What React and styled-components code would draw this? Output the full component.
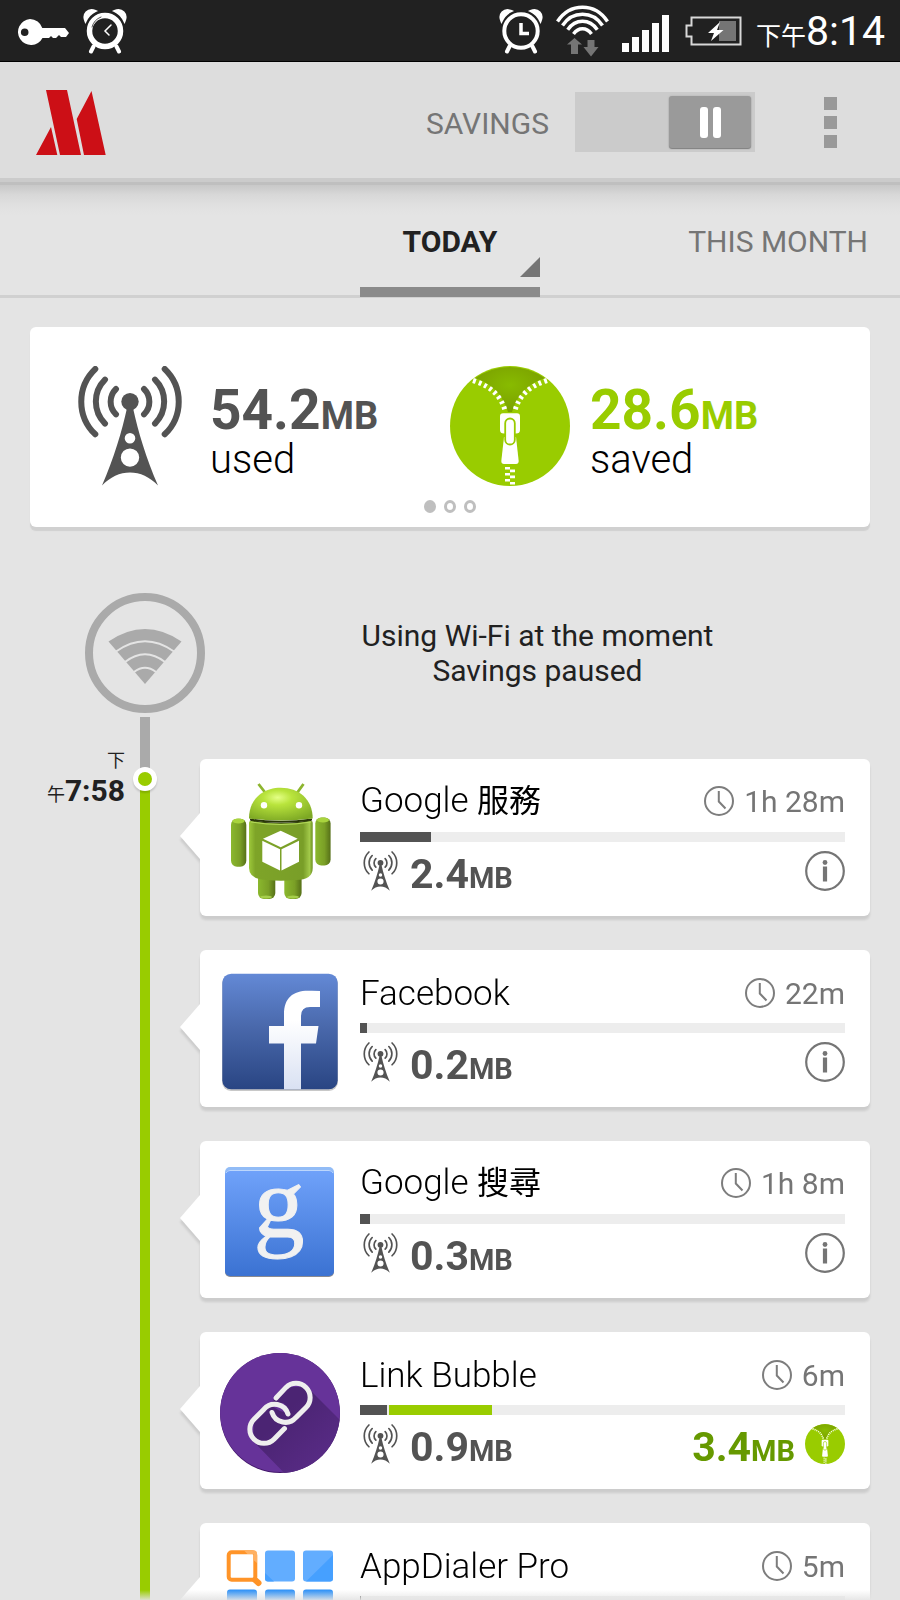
import React, { useState } from 'react';
import styled, { createGlobalStyle } from 'styled-components';

const GlobalStyle = createGlobalStyle`
  *, *::before, *::after { box-sizing: border-box; }
  body {
    margin: 0;
    background: #e4e4e4;
    color: #212121;
    font-family: Roboto, "Noto Sans CJK TC", sans-serif;
  }
  button { font: inherit; color: inherit; background: none; border: 0; padding: 0; cursor: pointer; }
`;

const Screen = styled.div`
  position: relative;
  display: flex;
  flex-direction: column;
  height: 100vh;
  overflow: hidden;
`;

const StatusBar = styled.div`
  display: flex;
  align-items: center;
  justify-content: space-between;
  flex: none;
  height: 62px;
  padding: 0 15px 0 16px;
  background: #212121;
  border-bottom: 1px solid #000;
`;

const StatusGroup = styled.div`
  display: flex;
  align-items: center;
  gap: 13px;
`;

const StatusClock = styled.time`
  padding-top: 6px;
  color: #fff;
  font-size: 41px;
  line-height: 54px;
  white-space: nowrap;
`;

const Meridiem = styled.span`
  font-size: ${(p) => p.$size}px;
  font-weight: 400;
`;

const Header = styled.header`
  display: flex;
  align-items: center;
  flex: none;
  height: 123px;
  padding: 0 54px 0 36px;
  background: #ddd;
  border-bottom: 3px solid #bfbfbf;
  box-shadow: inset 0 -4px #cbcbcb;
`;

const SavingsLabel = styled.label`
  margin-left: auto;
  padding-top: 4px;
  color: #757575;
  font-size: 30px;
  line-height: 36px;
`;

const Switch = styled.span`
  display: grid;
  align-items: center;
  margin-left: 26px;
  background: #cbcbcb;

  > * { grid-area: 1 / 1; }
`;

const SwitchInput = styled.input`
  appearance: none;
  width: 180px;
  height: 60px;
  margin: 0;
  cursor: pointer;
`;

const SwitchThumb = styled.span`
  display: flex;
  align-items: center;
  justify-content: center;
  gap: 5px;
  justify-self: ${(p) => (p.$on ? 'start' : 'end')};
  width: 82px;
  height: 52px;
  margin: 0 4px;
  border-radius: 3px;
  background: #9a9a9a;
  box-shadow: 0 1px 1px #7f7f7f, 0 0 2px #aaa;
  pointer-events: none;
`;

const PauseBar = styled.span`
  width: 8px;
  height: 31px;
  border-radius: 3px;
  background: #fff;
`;

const MenuButton = styled.button`
  display: flex;
  flex-direction: column;
  align-items: center;
  gap: 6px;
  width: 31px;
  margin-left: 60px;
`;

const MenuSquare = styled.span`
  width: 13px;
  height: 13px;
  background: #999;
`;

const Tabs = styled.nav`
  display: grid;
  grid-template-columns: 1fr 180px 1fr;
  flex: none;
  height: 113px;
  background: linear-gradient(#c8c8c8, #d8d8d8 10px, #e0e0e0 20px, #e4e4e4 30px);
  border-bottom: 3px solid #d0d0d0;
`;

const Tab = styled.button`
  position: relative;
  grid-column: ${(p) => p.$column};
  justify-self: ${(p) => (p.$column === 3 ? 'end' : 'stretch')};
  padding: 3px ${(p) => (p.$column === 3 ? 32 : 0)}px 0;
  color: ${(p) => (p.$active ? '#212121' : '#757575')};
  font-size: 30px;
  font-weight: ${(p) => (p.$active ? 700 : 400)};
  line-height: 36px;
`;

const TabUnderline = styled.span`
  position: absolute;
  left: 0;
  right: 0;
  bottom: -2px;
  height: 10px;
  background: #8a8a8a;
`;

const TabCorner = styled.span`
  position: absolute;
  right: 0;
  bottom: 18px;
  width: 20px;
  height: 20px;
  background: #757575;
  clip-path: polygon(100% 0, 100% 100%, 0 100%);
`;

const Content = styled.main`
  flex: 1;
  min-height: 0;
  overflow-y: auto;
  scrollbar-width: none;
`;

const Summary = styled.section`
  display: grid;
  grid-template-columns: 1fr 1fr;
  margin: 29px 30px 0;
  padding: 39px 0 14px;
  border-radius: 6px;
  background: #fff;
  box-shadow: 0 4px 1px #d0d0d0;
`;

const Total = styled.div`
  display: flex;
  gap: 20px;
  padding-left: ${(p) => p.$inset || 0}px;
`;

const TotalText = styled.div`
  padding-top: 19px;
`;

const TotalValue = styled.div`
  color: ${(p) => p.$color};
  font-size: 55px;
  font-weight: 700;
  line-height: 50px;
  white-space: nowrap;
`;

const TotalUnit = styled.span`
  font-size: 38px;
`;

const TotalCaption = styled.div`
  color: #000;
  font-size: 40px;
  font-weight: 300;
  line-height: 38px;
`;

const Dots = styled.div`
  grid-column: 1 / -1;
  display: flex;
  justify-content: center;
  gap: 8px;
  margin-top: 14px;
`;

const Dot = styled.button`
  width: 12px;
  height: 13px;
  border: 3px solid #bfbfbf;
  border-radius: 50%;
  background: ${(p) => (p.$active ? '#bfbfbf' : '#fff')};
`;

const Connection = styled.section`
  display: flex;
  align-items: flex-start;
  padding: 66px 30px 4px 85px;
`;

const ConnectionText = styled.p`
  flex: 1;
  margin: 0;
  padding-top: 25px;
  color: #212121;
  font-size: 30px;
  line-height: 35px;
  text-align: center;
`;

const Timeline = styled.section`
  display: flex;
  align-items: stretch;
`;

const TimeLabel = styled.time`
  flex: none;
  width: 80px;
  margin: 25px 15px 0 45px;
  font-size: 30px;
  font-weight: 700;
  line-height: 30px;
  text-align: right;
  white-space: nowrap;
`;

const Rail = styled.div`
  display: flex;
  flex-direction: column;
  align-items: center;
  flex: none;
  width: 10px;
  margin-right: 50px;
`;

const RailPart = styled.span`
  flex: ${(p) => (p.$length ? 'none' : 1)};
  width: 10px;
  height: ${(p) => (p.$length ? `${p.$length}px` : 'auto')};
  background: ${(p) => p.$color};
`;

const RailDot = styled.span`
  position: relative;
  flex: none;
  width: 24px;
  height: 24px;
  margin: -12px 0;
  border: 5px solid #fff;
  border-radius: 50%;
  background: #9c0;
  box-shadow: 0 2px 2px rgba(0, 0, 0, 0.15);
`;

const AppList = styled.ul`
  display: flex;
  flex: 1;
  flex-direction: column;
  gap: 34px;
  min-width: 0;
  margin: 0;
  padding: 42px 30px 34px 0;
  list-style: none;
`;

const AppCard = styled.li`
  position: relative;
  display: flex;
  gap: 20px;
  min-height: 157px;
  padding: 21px 25px 16px 20px;
  border-radius: 6px;
  background: #fff;
  filter: drop-shadow(0 4px 1px rgba(0, 0, 0, 0.1));

  &::before {
    content: '';
    position: absolute;
    top: 54px;
    left: -20px;
    border: solid transparent;
    border-width: 23px 20px 23px 0;
    border-right-color: #fff;
  }
`;

const AppBody = styled.div`
  flex: 1;
  min-width: 0;
`;

const AppHead = styled.div`
  display: flex;
  align-items: center;
  justify-content: space-between;
  height: 42px;
  padding-top: ${(p) => (p.$mixed ? 0 : 2)}px;
`;

const AppName = styled.h2`
  margin: 0;
  padding-top: ${(p) => (p.$mixed ? 0 : 2)}px;
  color: #000;
  font-size: 35px;
  font-weight: 300;
  line-height: 42px;
  white-space: nowrap;
`;

const HanText = styled.span`
  font-size: 32px;
  font-weight: 400;
`;

const Duration = styled.span`
  display: flex;
  align-items: center;
  gap: 10px;
  color: #757575;
  font-size: 30px;
  line-height: 40px;
  white-space: nowrap;
`;

const DurationText = styled.span`
  padding-top: 2px;
`;

const UsageBar = styled.div`
  display: flex;
  gap: 2px;
  height: 10px;
  margin-top: 10px;
  background: #ededed;
`;

const UsagePart = styled.span`
  background: ${(p) => p.$color};
`;

const AppFoot = styled.div`
  display: flex;
  align-items: flex-start;
  margin-top: 9px;
`;

const FootIcon = styled.span`
  display: flex;
  width: 40px;
  height: 40px;
  justify-content: center;
`;

const Amount = styled.span`
  margin: 0 10px;
  padding-top: 3px;
  color: ${(p) => p.$color};
  font-size: 41px;
  font-weight: 700;
  line-height: 40px;
  white-space: nowrap;
`;

const AmountUnit = styled.span`
  font-size: 29px;
`;

const Push = styled.span`
  flex: 1;
`;

const IconButton = styled.button`
  display: flex;
`;

const BottomFade = styled.div`
  position: absolute;
  left: 0;
  right: 0;
  bottom: 0;
  height: 10px;
  background: linear-gradient(rgba(228, 228, 228, 0), rgba(228, 228, 228, 0.9));
  pointer-events: none;
`;

function KeyIcon() {
  return (
    <svg width="54" height="46" viewBox="0 0 54 46" fill="#fff" aria-hidden="true">
      <path fillRule="evenodd" d="M14 11a13 13 0 0 1 12.3 9H49l4 5-3 4h-5l-2-2-3 3h-3l-2-2-2 2h-6.500A13 13 0 1 1 14 11zM8.700 20.500a3.800 3.800 0 1 0 0 7.600 3.800 3.800 0 0 0 0-7.600z" />
    </svg>
  );
}

function AlarmIcon({ bold }) {
  return (
    <svg width="44" height="46" viewBox="0 0 44 46" fill="none" stroke="#fff" strokeLinecap="round" aria-hidden="true">
      <path d="M2.500 13.500C-1 6 5 0 12.500 3C8 5 5 8 2.500 13.500zM41.500 13.500C45 6 39 0 31.500 3C36 5 39 8 41.500 13.500z" fill="#fff" strokeWidth="2" />
      <circle cx="22" cy="23" r={bold ? 15.500 : 16.700} strokeWidth={bold ? 5.500 : 4} />
      <path d="M10.500 38.500L8 43.500M33.500 38.500L36 43.500" strokeWidth="4" />
      {bold ? (
        <g>
          <path d="M28 17L22 23L26 27" strokeWidth="1.500" />
          <path d="M9 19a14.500 14.500 0 0 1 9-10" stroke="#555" strokeWidth="1" />
        </g>
      ) : (
        <path d="M22 15V25.500H30" strokeWidth="3.500" strokeLinecap="butt" />
      )}
    </svg>
  );
}

function WifiStatusIcon() {
  return (
    <svg width="53" height="52" viewBox="0 0 53 52" fill="none" stroke="#fff" strokeWidth="3.500" aria-hidden="true">
      <path d="M1.500 16.500C14 -2.500 39 -2.500 51.500 16.500M6.500 20.500C16.500 5.500 36.500 5.500 46.500 20.500M11.700 24.700C19.500 13.500 33.500 13.500 41.300 24.700M17.500 29C22.500 22 30.500 22 35.500 29" />
      <path d="M18.500 33L26 39.500H22V49H15V39.500H11zM31.500 35H38.500V42H42.500L35 51.500L27.500 42H31.500z" fill="#757575" stroke="none" />
    </svg>
  );
}

function SignalIcon() {
  return (
    <svg width="47" height="42" viewBox="0 0 47 42" fill="#fff" aria-hidden="true">
      <path d="M0 33h7v9H0zM10 27h7v15h-7zM20 20h7v22h-7zM30 13h7v29h-7zM40 5h7v37h-7z" />
    </svg>
  );
}

function BatteryIcon() {
  return (
    <svg width="61" height="30" viewBox="-3 0 61 30" aria-hidden="true">
      <path d="M6.500 1.500H55.500V28.500H6.500V20.500H1.500V9.500H6.500z" fill="none" stroke="#d8d8d8" strokeWidth="2" />
      <path d="M34 5H51V25H34z" fill="#757575" />
      <path d="M35 6L23 17H29L26 25L38.500 14H32z" fill="#fff" />
    </svg>
  );
}

function OperaMaxLogo() {
  return (
    <svg width="70" height="65" viewBox="0 0 70 65" fill="#cc0f16" role="img" aria-label="Opera Max">
      <path d="M10 0H31L45 65H24zM15 37L21.300 65H0zM55.500 1L69.700 65H48L40.700 29z" />
    </svg>
  );
}

function TowerIcon({ width = 104, height = 120, stroke = 6 }) {
  return (
    <svg width={width} height={height} viewBox="0 0 104 120" aria-hidden="true">
      <g fill="none" stroke="#535353" strokeWidth={stroke} strokeLinecap="round">
        <path d="M17.300 3A45 45 0 0 0 17.300 68.300M27 13.600A31 31 0 0 0 27 57.600M38 23A17.600 17.600 0 0 0 38 48.300" />
        <path d="M86.700 3A45 45 0 0 1 86.700 68.300M77 13.600A31 31 0 0 1 77 57.600M66 23A17.600 17.600 0 0 1 66 48.300" />
      </g>
      <circle cx="52" cy="35.600" r="8.700" fill="#535353" />
      <path
        fillRule="evenodd"
        fill="#535353"
        d="M49 42H55C60 65 68 92 80 119.500C64 102 40 102 24 119.500C36 92 44 65 49 42zM52 67a5.300 5.300 0 1 0 0 10.600a5.300 5.300 0 0 0 0-10.600zM52 82.400a9.200 9.200 0 1 0 0 18.400a9.200 9.200 0 0 0 0-18.400z"
      />
    </svg>
  );
}

function ZipperIcon({ size = 120 }) {
  return (
    <svg width={size} height={size} viewBox="0 0 120 120" aria-hidden="true">
      <defs>
        <radialGradient id="zipShade" cx="0.5" cy="0.4" r="0.6">
          <stop offset="0" stopColor="#8b0" />
          <stop offset="1" stopColor="#7a9f00" />
        </radialGradient>
      </defs>
      <circle cx="60" cy="60" r="60" fill="#9c0" />
      <path d="M25 12.300A60 60 0 0 1 95 12.300C79 17 67 29 62 46H58C53 29 41 17 25 12.300z" fill="url(#zipShade)" />
      <path d="M23 14.500C40 20 51 29 55.500 46M97 14.500C80 20 69 29 64.500 46" fill="none" stroke="#fff" strokeWidth="5" strokeDasharray="2.800 3.200" />
      <path d="M53 47.300H67Q70 47.300 70 50.300V64Q70 67.500 66 67.500H54Q50 67.500 50 64V50.300Q50 47.300 53 47.300z" fill="#fff" />
      <path d="M54 71H66L68.700 95Q68.700 98 66 98H54Q51.300 98 51.300 95z" fill="#fff" />
      <rect x="55.200" y="52.500" width="9.600" height="26" rx="4.800" fill="#fff" stroke="#9c0" strokeWidth="1.800" />
      <path d="M55 101h5v2.600h-5zM60 103.600h5v2.600h-5zM55 107h5v2.600h-5zM60 109.600h5v2.600h-5zM55 113h5v2.600h-5zM60 116h5v2.600h-5z" fill="#fff" />
    </svg>
  );
}

function WifiRoundIcon() {
  return (
    <svg width="120" height="120" viewBox="0 0 120 120" role="img" aria-label="Wi-Fi">
      <circle cx="60" cy="60" r="56" fill="none" stroke="#aaa" strokeWidth="8" />
      <path d="M23.500 48.500Q60 23.500 96.500 48.500L60 91z" fill="#aaa" />
      <path d="M31 58.500Q60 38 89 58.500M40 69Q60 53.500 80 69M49 79Q60 70.500 71 79" fill="none" stroke="#e4e4e4" strokeWidth="2" />
    </svg>
  );
}

function ClockIcon() {
  return (
    <svg width="30" height="30" viewBox="0 0 30 30" fill="none" stroke="#7d7d7d" strokeWidth="2" aria-hidden="true">
      <circle cx="15" cy="15" r="14" />
      <path d="M14.800 5V15.500L21.500 22.500" />
    </svg>
  );
}

function InfoIcon() {
  return (
    <svg width="40" height="40" viewBox="0 0 40 40" aria-hidden="true">
      <circle cx="20" cy="20" r="18.800" fill="none" stroke="#757575" strokeWidth="2.200" />
      <circle cx="20" cy="11.500" r="2.400" fill="#757575" />
      <path d="M17.900 15.500H22.100V30.500H17.900z" fill="#757575" />
    </svg>
  );
}

function AndroidArt() {
  return (
    <svg width="120" height="120" viewBox="0 0 120 120" aria-hidden="true">
      <defs>
        <radialGradient id="droidHead" cx="0.45" cy="0.3" r="0.75">
          <stop offset="0" stopColor="#e4ff86" />
          <stop offset="0.3" stopColor="#b9e43c" />
          <stop offset="1" stopColor="#7da824" />
        </radialGradient>
        <linearGradient id="droidBody" x1="0" y1="0" x2="1" y2="0">
          <stop offset="0" stopColor="#9dc83a" />
          <stop offset="0.1" stopColor="#7ea428" />
          <stop offset="0.85" stopColor="#799e28" />
          <stop offset="0.95" stopColor="#a2c94a" />
          <stop offset="1" stopColor="#6b8f20" />
        </linearGradient>
        <linearGradient id="droidLimb" x1="0" y1="0" x2="1" y2="0">
          <stop offset="0" stopColor="#8bb82e" />
          <stop offset="0.6" stopColor="#7a9f26" />
          <stop offset="1" stopColor="#567018" />
        </linearGradient>
      </defs>
      <path d="M38.500 4L45.500 13M83.500 4L77 13" stroke="#8db52e" strokeWidth="2.800" />
      <rect x="38" y="88" width="17.300" height="31" rx="6" fill="url(#droidLimb)" />
      <rect x="64.300" y="88" width="17.300" height="31" rx="6" fill="url(#droidLimb)" />
      <ellipse cx="46" cy="117" rx="6" ry="1.500" fill="#a6cf4b" />
      <ellipse cx="73" cy="117" rx="6" ry="1.500" fill="#a6cf4b" />
      <rect x="11" y="38.700" width="15.300" height="48" rx="6" fill="url(#droidLimb)" />
      <rect x="95.300" y="37.500" width="15.300" height="48" rx="6" fill="url(#droidLimb)" />
      <ellipse cx="18.500" cy="41" rx="6" ry="2.500" fill="#a9d43e" />
      <ellipse cx="103" cy="40" rx="6" ry="2.500" fill="#a9d43e" />
      <path d="M31 40Q61 46 91 40V44H31z" fill="#2a3808" />
      <path d="M29 43Q29 40.500 31 41Q61 46 91 41Q92.700 40.500 92.700 43V88Q92.700 100 76 100Q61 101.500 46 100Q29 99 29 88z" fill="url(#droidBody)" />
      <path d="M31 42Q61 47 91 42" fill="none" stroke="#b4da5b" strokeWidth="1" />
      <path d="M30 39.500Q61 44 92 39.500" fill="none" stroke="#2a3808" strokeWidth="2" />
      <path d="M29 38.500C29 19 43 7.700 60.800 7.700S92.700 19 92.700 38.500Q61 42.500 29 38.500z" fill="url(#droidHead)" />
      <circle cx="44" cy="25.300" r="3.200" fill="#fff" />
      <circle cx="79" cy="25.300" r="3.200" fill="#fff" />
      <path d="M60.700 50.700L77.700 58.700L60.700 67.300L43 58.700zM42.300 60.800L60 69.300V90.500L42.300 81.700zM79 60.800L61.500 69.300V90.500L79 81.700z" fill="#fff" />
    </svg>
  );
}

function FacebookArt() {
  return (
    <svg width="120" height="120" viewBox="0 0 120 120" aria-hidden="true">
      <defs>
        <linearGradient id="fbBlue" x1="0" y1="0" x2="0" y2="1">
          <stop offset="0" stopColor="#6389d6" />
          <stop offset="0.45" stopColor="#4a69ac" />
          <stop offset="1" stopColor="#294583" />
        </linearGradient>
        <linearGradient id="fbWhite" x1="0" y1="0" x2="0" y2="1">
          <stop offset="0.3" stopColor="#fff" />
          <stop offset="1" stopColor="#d9e1f3" />
        </linearGradient>
      </defs>
      <rect x="2" y="4" width="116" height="116" rx="9" fill="#c8c8c8" />
      <rect x="2.300" y="2.700" width="115.400" height="115.600" rx="9" fill="url(#fbBlue)" />
      <path d="M64 118.300V72.500H49V55H64V43C64 27 73 19.700 88 19.700Q95 19.500 100 20V36H90Q81 36 81 45V55H98.500L96 72.500H81V118.300z" fill="url(#fbWhite)" />
    </svg>
  );
}

const GoogleSvg = styled.svg`
  overflow: visible;
`;

function GoogleArt() {
  return (
    <GoogleSvg width="120" height="120" viewBox="0 0 120 120" aria-hidden="true">
      <defs>
        <linearGradient id="gBlue" x1="0" y1="0" x2="0" y2="1">
          <stop offset="0" stopColor="#70a2fa" />
          <stop offset="1" stopColor="#3b72d2" />
        </linearGradient>
      </defs>
      <rect x="5" y="7" width="109" height="108" rx="5" fill="#8a8a90" />
      <rect x="5" y="5" width="109" height="20" rx="5" fill="#92bcf6" />
      <rect x="5" y="8" width="109" height="106" rx="5" fill="url(#gBlue)" />
      <path d="M6 11Q7 8.500 10 8.500H109Q112 8.500 113 11" fill="none" stroke="#bcd6fc" strokeWidth="1" />
      <text x="59" y="75" textAnchor="middle" fill="#f1f1f1" stroke="#f1f1f1" strokeWidth="1" fontFamily="Liberation Serif, serif" fontSize="102">g</text>
    </GoogleSvg>
  );
}

function LinkBubbleArt() {
  return (
    <svg width="120" height="120" viewBox="0 0 120 120" aria-hidden="true">
      <defs>
        <clipPath id="bubbleClip"><circle cx="60" cy="60" r="60" /></clipPath>
        <linearGradient id="bubbleShade" x1="0.3" y1="0.3" x2="0.9" y2="0.9">
          <stop offset="0" stopColor="#4b2473" />
          <stop offset="1" stopColor="#5c2d8b" />
        </linearGradient>
      </defs>
      <circle cx="60" cy="60" r="60" fill="#44186b" />
      <g clipPath="url(#bubbleClip)">
        <circle cx="60" cy="59" r="60" fill="#639" />
        <path d="M87 34L130 77V130H74L33 88L34 66L48 53L56 45L67 34z" fill="url(#bubbleShade)" />
        <path d="M64 50l4 10-8-2-8-5z" fill="#639" />
      </g>
      <g fill="none" stroke="#eee" strokeWidth="5" strokeLinecap="round">
        <path d="M56 45L66 34.400A14 14 0 0 1 86 54.400L76 64.400A14 14 0 0 1 52 59.500" />
        <path d="M64.500 75.600L54 86.200A14 14 0 0 1 34 66.200L44 56.200A14 14 0 0 1 68 61" />
      </g>
    </svg>
  );
}

function AppDialerArt() {
  return (
    <svg width="120" height="120" viewBox="0 0 120 120" aria-hidden="true">
      <path d="M33 34L38.500 39" stroke="#ff9428" strokeWidth="6" strokeLinecap="round" />
      <rect x="8.700" y="8.200" width="26.600" height="27.600" rx="3" fill="#fff" stroke="#ff9428" strokeWidth="4" />
      <path d="M24 6.500H35Q37 7 37 9V19L33.500 16V10H27.500z" fill="#ffb163" />
      <g fill="#62adff">
        <rect x="45" y="6.500" width="30" height="31" rx="3" />
        <rect x="83" y="6.500" width="30" height="31" rx="3" />
      </g>
      <path d="M45 29L54 37.500H48Q45 37.500 45 34.500zM113 11V34.500Q113 37.500 110 37.500H86z" fill="#46a0ff" />
      <g fill="#2f92f8">
        <rect x="7" y="45.500" width="30" height="31" rx="3" />
        <rect x="45" y="45.500" width="30" height="31" rx="3" />
        <rect x="83" y="45.500" width="30" height="31" rx="3" />
      </g>
    </svg>
  );
}

const apps = [
  { name: 'Google', han: '服務', duration: '1h 28m', used: '2.4', bar: [71], Art: AndroidArt },
  { name: 'Facebook', duration: '22m', used: '0.2', bar: [7], Art: FacebookArt },
  { name: 'Google', han: '搜尋', duration: '1h 8m', used: '0.3', bar: [10], Art: GoogleArt },
  { name: 'Link Bubble', duration: '6m', used: '0.9', saved: '3.4', bar: [27, 103], Art: LinkBubbleArt },
  { name: 'AppDialer Pro', duration: '5m', bar: [1], Art: AppDialerArt },
];

const BAR_TOTAL = 485;
const barColors = ['#535353', '#9c0'];

function AppEntry({ app }) {
  const { name, han, duration, used, saved, bar, Art } = app;
  return (
    <AppCard>
      <Art />
      <AppBody>
        <AppHead $mixed={Boolean(han)}>
          <AppName $mixed={Boolean(han)}>
            {name}
            {han && <> <HanText>{han}</HanText></>}
          </AppName>
          <Duration>
            <ClockIcon />
            <DurationText>{duration}</DurationText>
          </Duration>
        </AppHead>
        <UsageBar>
          {bar.map((part, i) => (
            <UsagePart key={i} $color={barColors[i]} style={{ width: `${(part / BAR_TOTAL) * 100}%` }} />
          ))}
        </UsageBar>
        {used && (
          <AppFoot>
            <FootIcon><TowerIcon width={35} height={40} stroke={5} /></FootIcon>
            <Amount $color="#535353">{used}<AmountUnit>MB</AmountUnit></Amount>
            <Push />
            {saved ? (
              <>
                <Amount $color="#690">{saved}<AmountUnit>MB</AmountUnit></Amount>
                <ZipperIcon size={40} />
              </>
            ) : (
              <IconButton type="button" aria-label={`Details for ${name}`}><InfoIcon /></IconButton>
            )}
          </AppFoot>
        )}
      </AppBody>
    </AppCard>
  );
}

export default function App() {
  const [savings, setSavings] = useState(false);
  const [tab, setTab] = useState('TODAY');
  const [page, setPage] = useState(0);

  return (
    <Screen>
      <GlobalStyle />
      <StatusBar>
        <StatusGroup>
          <KeyIcon />
          <AlarmIcon bold />
        </StatusGroup>
        <StatusGroup>
          <AlarmIcon />
          <WifiStatusIcon />
          <SignalIcon />
          <BatteryIcon />
          <StatusClock><Meridiem $size={25}>下午</Meridiem>8:14</StatusClock>
        </StatusGroup>
      </StatusBar>

      <Header>
        <OperaMaxLogo />
        <SavingsLabel htmlFor="savings">SAVINGS</SavingsLabel>
        <Switch>
          <SwitchInput
            id="savings"
            type="checkbox"
            role="switch"
            checked={savings}
            onChange={(e) => setSavings(e.target.checked)}
          />
          <SwitchThumb $on={savings}>
            <PauseBar />
            <PauseBar />
          </SwitchThumb>
        </Switch>
        <MenuButton type="button" aria-label="Menu">
          <MenuSquare />
          <MenuSquare />
          <MenuSquare />
        </MenuButton>
      </Header>

      <Tabs role="tablist">
        {['TODAY', 'THIS MONTH'].map((label, i) => (
          <Tab
            key={label}
            type="button"
            role="tab"
            aria-selected={tab === label}
            $active={tab === label}
            $column={i + 2}
            onClick={() => setTab(label)}
          >
            {label}
            {tab === label && (
              <>
                <TabCorner />
                <TabUnderline />
              </>
            )}
          </Tab>
        ))}
      </Tabs>

      <Content>
        <Summary>
          <Total $inset={40}>
            <svg width="120" height="120" viewBox="0 0 120 120" aria-hidden="true">
              <g transform="translate(8 0)"><TowerIcon /></g>
            </svg>
            <TotalText>
              <TotalValue $color="#535353">54.2<TotalUnit>MB</TotalUnit></TotalValue>
              <TotalCaption>used</TotalCaption>
            </TotalText>
          </Total>
          <Total>
            <ZipperIcon />
            <TotalText>
              <TotalValue $color="#9c0">28.6<TotalUnit>MB</TotalUnit></TotalValue>
              <TotalCaption>saved</TotalCaption>
            </TotalText>
          </Total>
          <Dots>
            {[0, 1, 2].map((n) => (
              <Dot key={n} type="button" aria-label={`Page ${n + 1}`} $active={page === n} onClick={() => setPage(n)} />
            ))}
          </Dots>
        </Summary>

        <Connection>
          <WifiRoundIcon />
          <ConnectionText>
            Using Wi-Fi at the moment
            <br />
            Savings paused
          </ConnectionText>
        </Connection>

        <Timeline>
          <TimeLabel>
            <Meridiem $size={18}>下</Meridiem>
            <br />
            <Meridiem $size={18}>午</Meridiem>7:58
          </TimeLabel>
          <Rail>
            <RailPart $length={62} $color="#aaa" />
            <RailDot />
            <RailPart $color="#9c0" />
          </Rail>
          <AppList>
            {apps.map((app) => <AppEntry key={app.duration} app={app} />)}
          </AppList>
        </Timeline>
      </Content>
      <BottomFade />
    </Screen>
  );
}
